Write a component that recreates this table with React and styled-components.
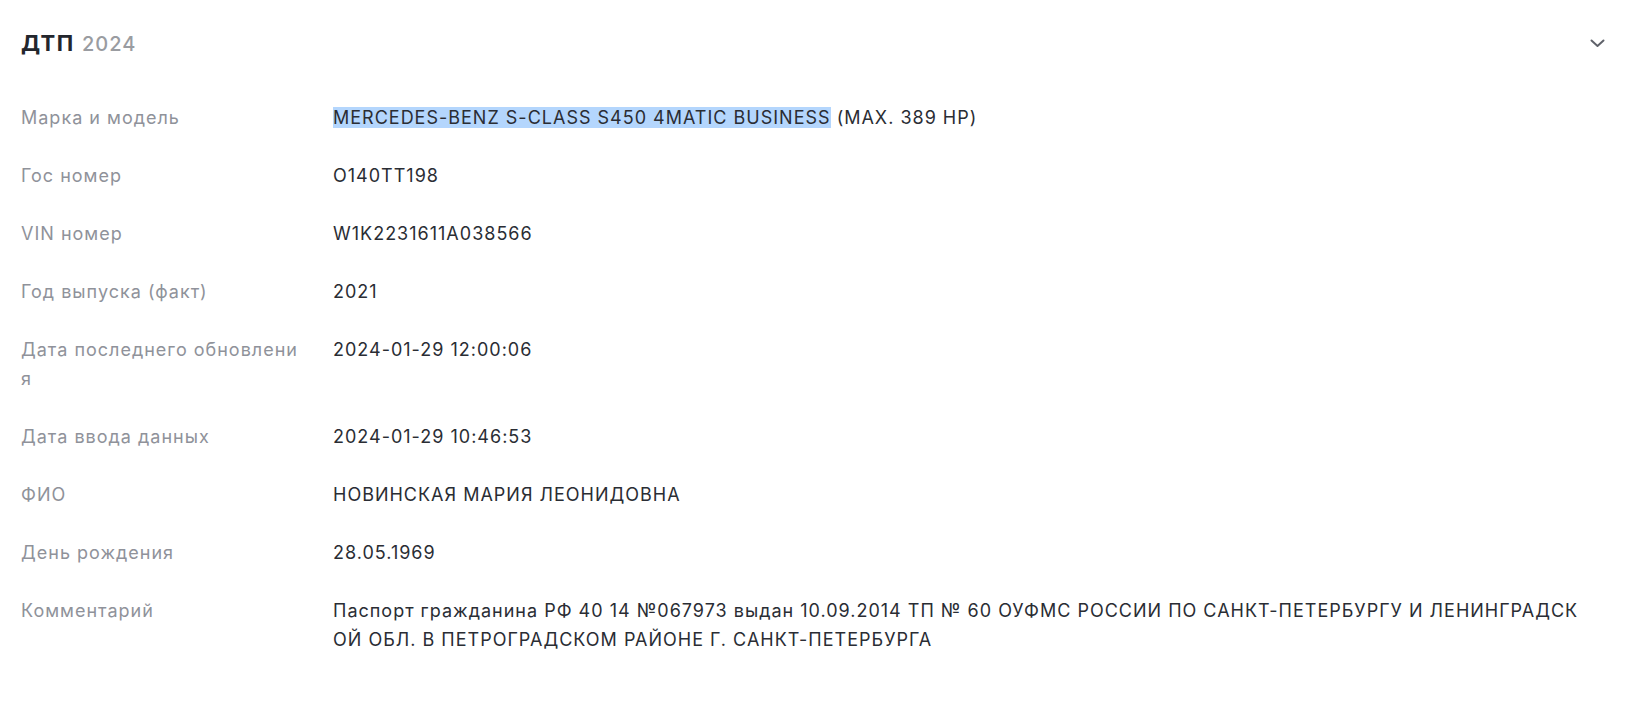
import styled, { createGlobalStyle } from "styled-components";

const GlobalStyle = createGlobalStyle`
  body {
    margin: 0;
    background: #ffffff;
    font-family: "Inter", "Noto Sans", sans-serif;
  }
`;

const Section = styled.section`
  padding: 28px 21px 40px;
`;

const Header = styled.div`
  display: flex;
  align-items: center;
  justify-content: space-between;
  height: 30px;
  margin-bottom: 45px;
`;

const Title = styled.h2`
  margin: 0;
  font-size: 22px;
  font-weight: 700;
  letter-spacing: 1.7px;
  color: #23262d;
  line-height: 30px;
`;

const Year = styled.span`
  font-weight: 500;
  font-size: 20px;
  letter-spacing: 1px;
  color: #9a9ca1;
  margin-left: 7px;
`;

const Toggle = styled.button`
  border: none;
  background: none;
  padding: 0;
  width: 16px;
  height: 16px;
  display: flex;
  align-items: center;
  justify-content: center;
  cursor: pointer;
`;

const Grid = styled.dl`
  display: grid;
  grid-template-columns: 278px 1fr;
  column-gap: 34px;
  row-gap: 29px;
  margin: 0 22px 0 0;
  font-size: 18px;
  letter-spacing: 1px;
  line-height: 29px;
`;

const Label = styled.dt`
  color: #8f929a;
  word-break: break-all;
`;

const Value = styled.dd`
  margin: 0;
  color: #2a2d34;
  word-break: break-all;
`;

const Selected = styled.span`
  background: #b4d6fd;
`;

const rows = [
  ["Гос номер", "О140ТТ198"],
  ["VIN номер", "W1K2231611A038566"],
  ["Год выпуска (факт)", "2021"],
  ["Дата последнего обновления", "2024-01-29 12:00:06"],
  ["Дата ввода данных", "2024-01-29 10:46:53"],
  ["ФИО", "НОВИНСКАЯ МАРИЯ ЛЕОНИДОВНА"],
  ["День рождения", "28.05.1969"],
  [
    "Комментарий",
    "Паспорт гражданина РФ 40 14 №067973 выдан 10.09.2014 ТП № 60 ОУФМС РОССИИ ПО САНКТ-ПЕТЕРБУРГУ И ЛЕНИНГРАДСКОЙ ОБЛ. В ПЕТРОГРАДСКОМ РАЙОНЕ Г. САНКТ-ПЕТЕРБУРГА",
  ],
];

export default function App() {
  return (
    <>
      <GlobalStyle />
      <Section>
        <Header>
          <Title>
            ДТП<Year>2024</Year>
          </Title>
          <Toggle aria-label="Свернуть">
            <svg width="15" height="9" viewBox="0 0 15 9" fill="none">
              <path
                d="M1.5 1.5L7.5 7L13.5 1.5"
                stroke="#5f626a"
                strokeWidth="2"
                strokeLinecap="round"
                strokeLinejoin="round"
              />
            </svg>
          </Toggle>
        </Header>
        <Grid>
          <Label>Марка и модель</Label>
          <Value>
            <Selected>MERCEDES-BENZ S-CLASS S450 4MATIC BUSINESS</Selected> (MAX. 389 HP)
          </Value>
          {rows.map(([label, value]) => (
            <>
              <Label key={label}>{label}</Label>
              <Value key={label + "-v"}>{value}</Value>
            </>
          ))}
        </Grid>
      </Section>
    </>
  );
}
